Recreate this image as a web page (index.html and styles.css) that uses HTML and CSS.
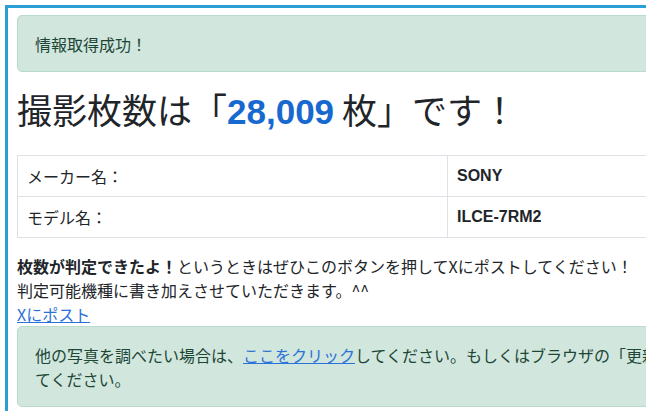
FILE: index.html
```html
<!DOCTYPE html>
<html lang="ja">
<head>
<meta charset="utf-8">
<title>撮影枚数</title>
<link rel="stylesheet" href="styles.css">
</head>
<body>
<div class="frame">
  <div class="alert">情報取得成功！</div>
  <h1 class="title">撮影枚数は「<span class="count">28,009</span> 枚」です！</h1>
  <table class="info">
    <tr><td class="label">メーカー名：</td><td class="value">SONY</td></tr>
    <tr><td class="label">モデル名：</td><td class="value">ILCE-7RM2</td></tr>
  </table>
  <p class="note"><strong>枚数が判定できたよ！</strong>というときはぜひこのボタンを押してXにポストしてください！<br>判定可能機種に書き加えさせていただきます。^^</p>
  <div class="post"><a href="#">Xにポスト</a></div>
  <div class="alert">他の写真を調べたい場合は、<a href="#">ここをクリック</a>してください。もしくはブラウザの「更新」ボタンを押してください。</div>
</div>
</body>
</html>
```

FILE: styles.css
```css
html {
  overflow: hidden;
}
body {
  margin: 0;
  font-family: "Noto Sans CJK JP", sans-serif;
  font-size: 16px;
  line-height: 1.5;
  color: #212529;
  background: #fff;
}
.frame {
  margin: 5px;
  width: 775px;
  padding: 7px 9px 20px;
  border: 3px solid #2a9fd6;
}
.alert {
  background: #d1e7dd;
  border: 1px solid #badbcc;
  border-radius: 5px;
  color: #1d4636;
  padding: 16px 17px 15px;
  margin-bottom: 16px;
}
.alert a {
  color: #2a72d8;
  text-decoration: underline;
}
.title {
  font-weight: 400;
  font-size: 35px;
  line-height: 1.2;
  margin: 0 0 22px;
  color: #212529;
}
.count {
  font-family: "Liberation Sans", sans-serif;
  font-weight: 700;
  color: #1769cf;
}
.info {
  width: 775px;
  border-collapse: collapse;
  margin-bottom: 16px;
}
.info td {
  border: 1px solid #dee2e6;
  padding: 8px 9px;
  line-height: 24px;
}
.label {
  width: 411px;
}
.value {
  font-family: "Liberation Sans", sans-serif;
  font-weight: 700;
}
.note {
  margin: 0;
}
.note strong {
  font-weight: 700;
}
.post {
  margin-bottom: 0;
}
.post a {
  color: #2a72d8;
  text-decoration: underline;
}
```
